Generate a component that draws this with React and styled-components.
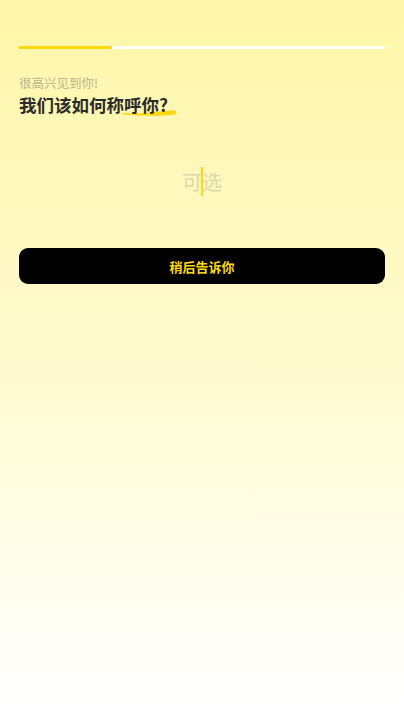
import React, { useState } from "react";
import styled, { createGlobalStyle } from "styled-components";

const GlobalStyle = createGlobalStyle`
  html, body {
    margin: 0;
    padding: 0;
  }
  body {
    font-family: "Noto Sans CJK SC", "Noto Sans", sans-serif;
  }
  * {
    box-sizing: border-box;
  }
`;

const App = () => {
  const [name, setName] = useState("");

  return (
    <>
      <GlobalStyle />
      <Page>
        <Progress>
          <ProgressFill style={{ width: "25.5%" }} />
        </Progress>

        <Header>
          <Greeting>很高兴见到你!</Greeting>
          <Title>
            我们该如何称
            <Highlight>
              呼你?
              <Brush viewBox="0 0 56 7" preserveAspectRatio="none">
                <path
                  d="M0.5 4.2 C 10 4.6, 24 4.4, 40 2.6 C 46 1.8, 52 1.2, 54.5 1.8 C 56 2.4, 56 4.8, 54 5.4 C 46 6.4, 36 6.8, 24 6.6 C 14 6.4, 6 5.8, 0.5 5.2 Z"
                  fill="#fcd80c"
                />
              </Brush>
            </Highlight>
          </Title>
        </Header>

        <InputWrap>
          <NameInput
            value={name}
            onChange={(e) => setName(e.target.value)}
            placeholder="可选"
          />
          {name === "" && <Caret />}
        </InputWrap>

        <LaterButton>稍后告诉你</LaterButton>
      </Page>
    </>
  );
};

export default App;

const Page = styled.div`
  width: 100%;
  min-height: 100vh;
  display: flex;
  flex-direction: column;
  padding: 46px 19px 0 19px;
  background: linear-gradient(180deg, #fff6a8 0%, #fffbd2 55%, #ffffff 100%);
`;

const Progress = styled.div`
  height: 3px;
  margin: 0 -1px;
  border-radius: 2px;
  background-color: #ffffff;
  overflow: hidden;
`;

const ProgressFill = styled.div`
  height: 100%;
  border-radius: 2px;
  background-color: #fcd80c;
`;

const Header = styled.div`
  display: flex;
  flex-direction: column;
  margin-top: 25px;
`;

const Greeting = styled.p`
  margin: 0;
  font-size: 12.5px;
  line-height: 18px;
  color: #b9b48f;
`;

const Title = styled.h1`
  margin: 0;
  font-size: 17.5px;
  line-height: 26px;
  font-weight: 700;
  color: #2b2b2b;
`;

const Highlight = styled.span`
  position: relative;
  z-index: 0;
`;

const Brush = styled.svg`
  position: absolute;
  left: -3px;
  bottom: 1px;
  width: 56px;
  height: 7px;
  z-index: -1;
`;

const InputWrap = styled.div`
  position: relative;
  display: flex;
  justify-content: center;
  margin-top: 45px;
`;

const NameInput = styled.input`
  width: 100%;
  height: 36px;
  border: none;
  outline: none;
  background: transparent;
  text-align: center;
  font-family: "Noto Sans CJK SC", "Noto Sans", sans-serif;
  font-size: 20px;
  color: #2b2b2b;
  caret-color: transparent;

  &::placeholder {
    color: #dcd7b0;
  }
`;

const Caret = styled.span`
  position: absolute;
  left: 50%;
  top: 4px;
  width: 2px;
  height: 29px;
  margin-left: -1px;
  background-color: #fcd80c;
`;

const LaterButton = styled.button`
  margin-top: 49px;
  height: 36px;
  width: 100%;
  border: none;
  border-radius: 9px;
  background-color: #000000;
  color: #fcd80c;
  font-family: "Noto Sans CJK SC", "Noto Sans", sans-serif;
  font-size: 13px;
  font-weight: 700;
  cursor: pointer;
`;
